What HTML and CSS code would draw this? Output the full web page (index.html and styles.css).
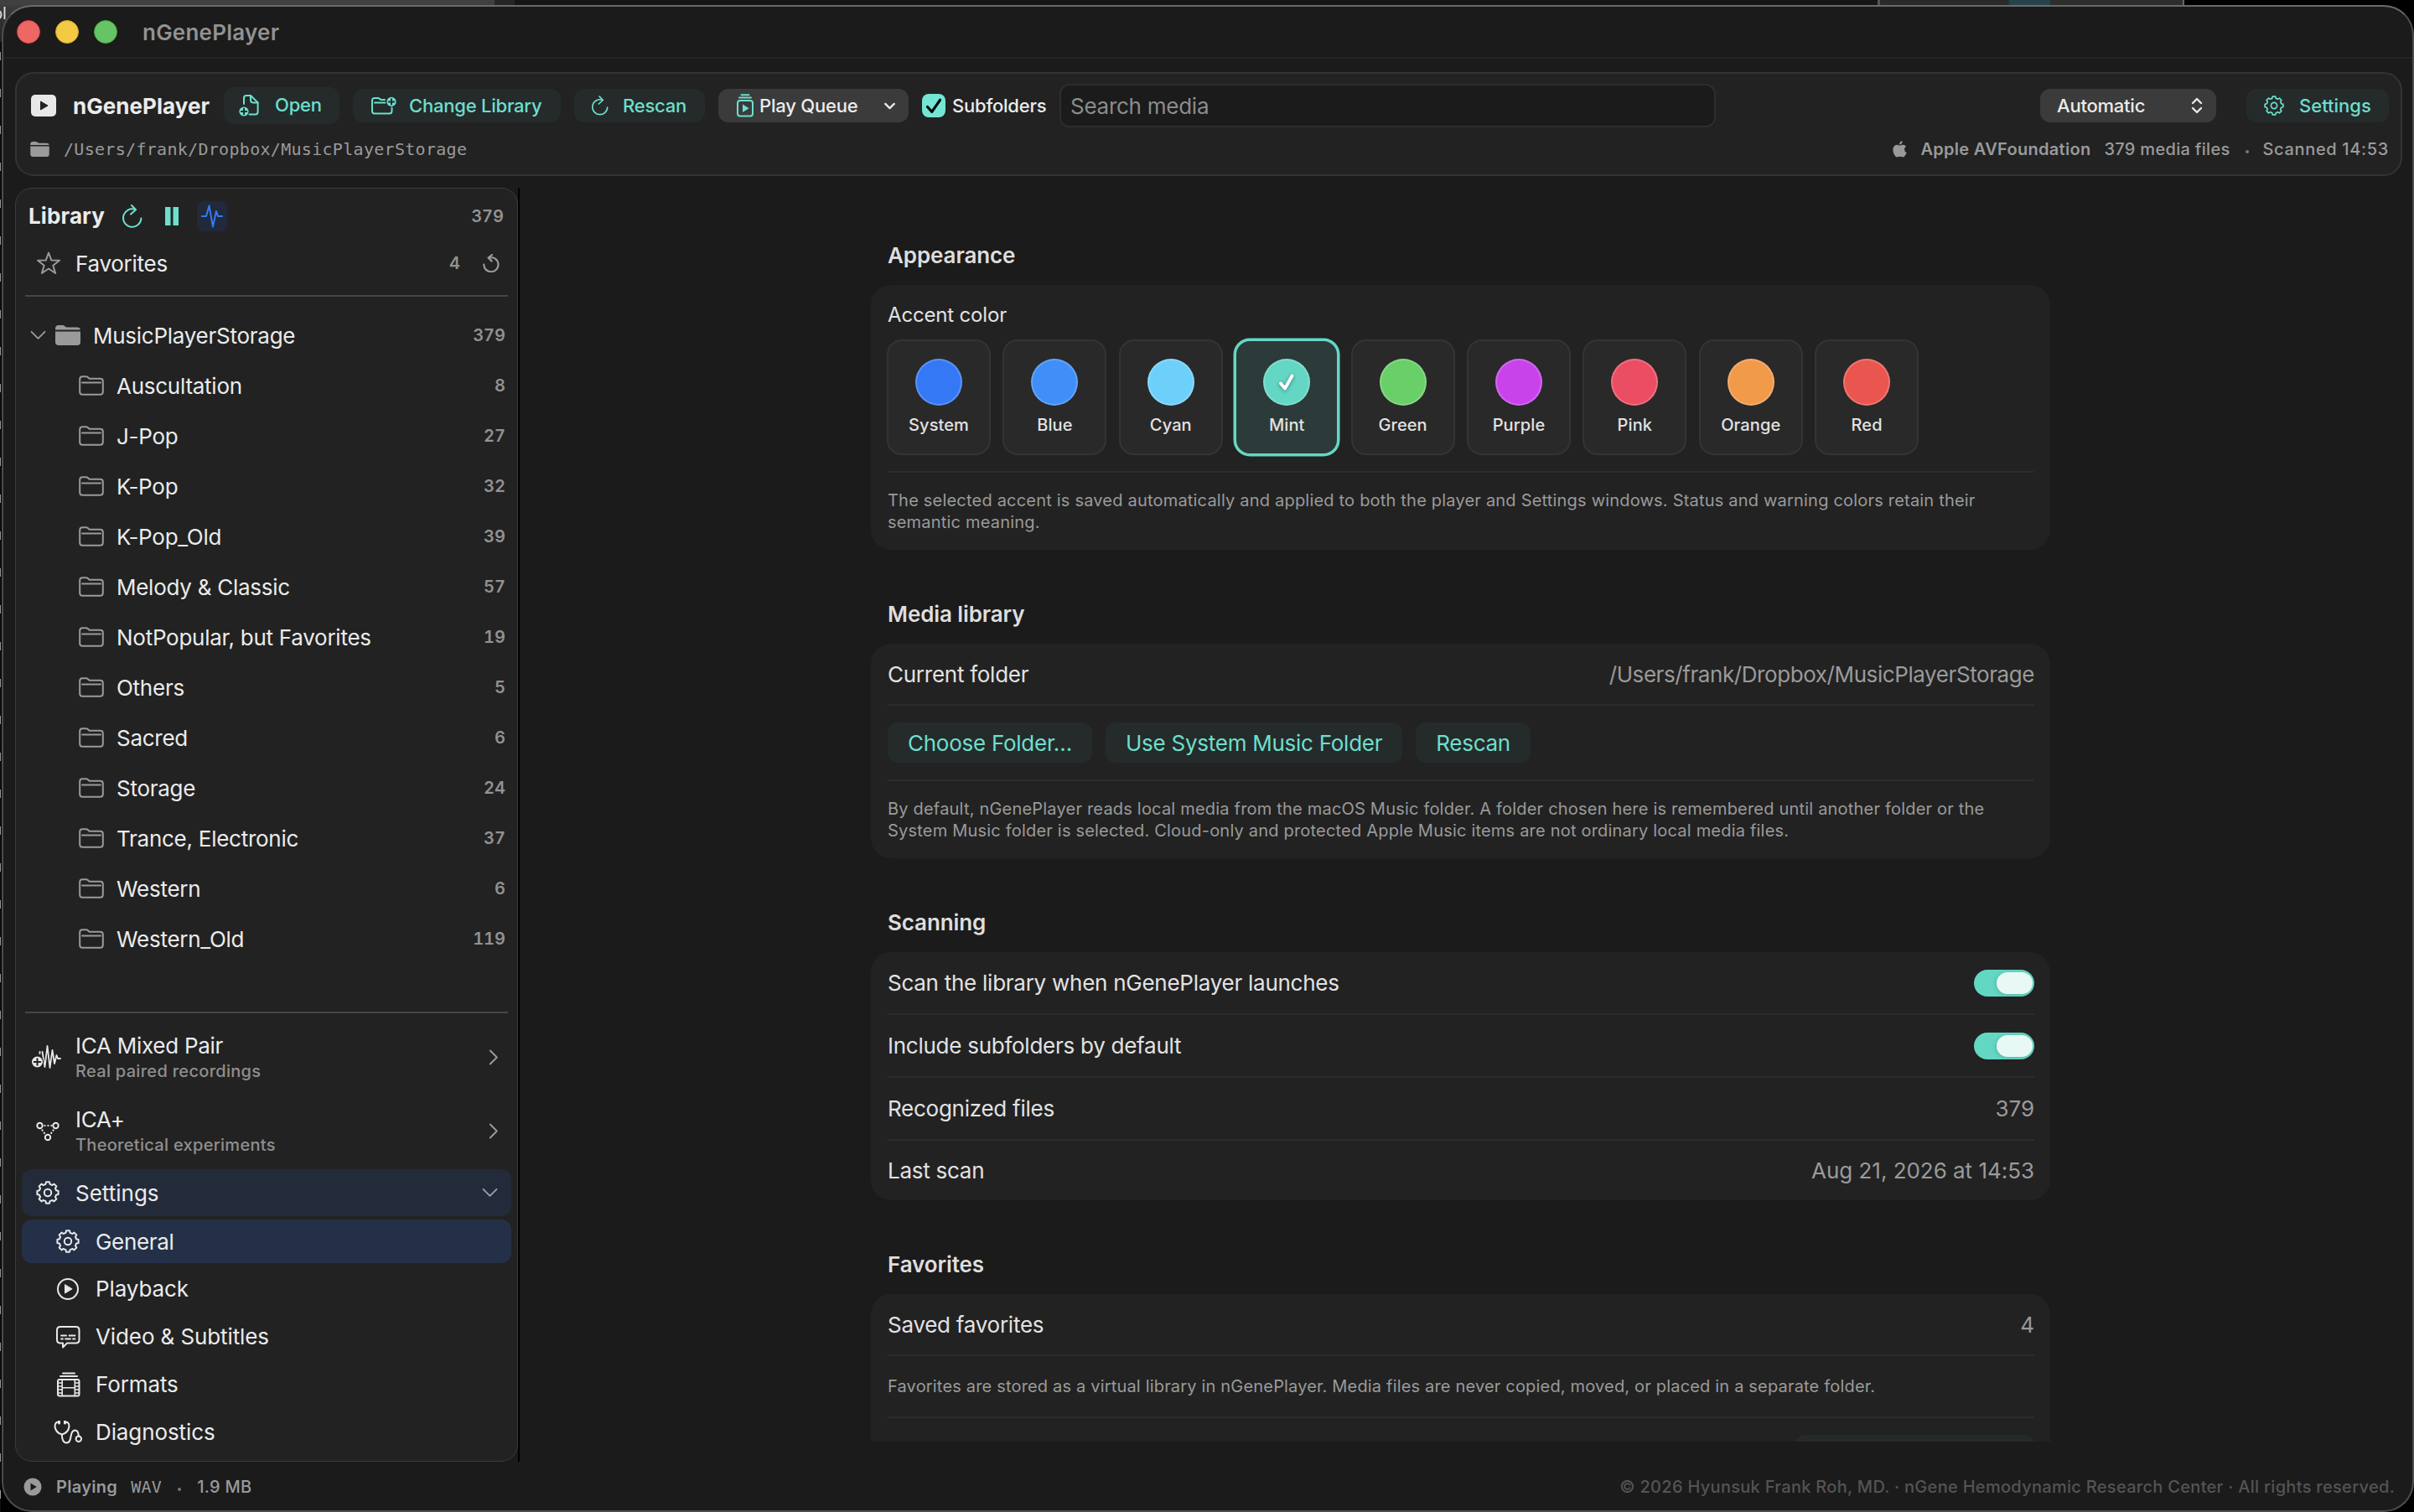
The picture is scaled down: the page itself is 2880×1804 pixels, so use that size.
FILE: index.html
```html
<!DOCTYPE html>
<html lang="en">
<head>
    <meta charset="UTF-8">
    <meta name="viewport" content="width=device-width, initial-scale=1.0">
    <title>nGenePlayer</title>
    <link rel="stylesheet" href="styles.css">
</head>
<body>
    <svg class="symbols" xmlns="http://www.w3.org/2000/svg">
        <symbol id="gear" viewBox="0 0 28 28">
            <path d="M11.33 4.05L12 1.36H16L16.67 4.05Q18 4.2 19.15 5.08L21.52 3.64L24.36 6.48L22.92 8.85Q23.8 10 23.95 11.33L26.64 12V16L23.95 16.67Q23.8 18 22.92 19.15L24.36 21.52L21.52 24.36L19.15 22.92Q18 23.8 16.67 23.95L16 26.64H12L11.33 23.95Q10 23.8 8.85 22.92L6.48 24.36L3.64 21.52L5.08 19.15Q4.2 18 4.05 16.67L1.36 16V12L4.05 11.33Q4.2 10 5.08 8.85L3.64 6.48L6.48 3.64L8.85 5.08Q10 4.2 11.33 4.05Z"/>
            <circle cx="14" cy="14" r="4.2"/>
        </symbol>
        <symbol id="rescan" viewBox="0 0 24 28">
            <path d="M22.4 16.4A10.7 10.7 0 1 1 15.4 6"/>
            <path d="M11 1L16 6.2L10 11.6"/>
        </symbol>
        <symbol id="folder" viewBox="0 0 30 24">
            <path d="M1.2 4.6Q1.2 1.2 4.4 1.2H8.6Q10 1.2 11 2.2L12 3.2Q12.6 3.8 13.8 3.8H25.6Q28.8 3.8 28.8 7V19.6Q28.8 22.8 25.6 22.8H4.4Q1.2 22.8 1.2 19.6Z"/>
            <path d="M4 8.4H26"/>
        </symbol>
        <symbol id="folder-fill" viewBox="0 0 30 24">
            <path d="M0 5.4V4Q0 0 4 0H8.4Q10.2 0 11.6 1.4Q12.6 2.4 14.4 2.4H26Q29.6 2.4 29.8 5.4Z"/>
            <path d="M0 7.4H30V20Q30 24 26 24H4Q0 24 0 20Z"/>
        </symbol>
        <symbol id="chevron-right" viewBox="0 0 12 20">
            <path d="M1.6 1.6L10 10L1.6 18.4"/>
        </symbol>
        <symbol id="chevron-down" viewBox="0 0 20 12">
            <path d="M1.6 1.6L10 10L18.4 1.6"/>
        </symbol>
    </svg>

    <div class="desktop-text">pl</div>

    <div class="window">
        <div class="titlebar">
            <span class="light red"></span>
            <span class="light yellow"></span>
            <span class="light green"></span>
            <span class="window-title">nGenePlayer</span>
        </div>

        <header class="toolbar">
            <div class="toolbar-row">
                <svg class="app-icon" width="30" height="26" viewBox="0 0 30 26"><rect width="30" height="26" rx="5" fill="#e8e8e8"/><path d="M11.5 8V18L20 13Z" fill="#222" stroke="#222" stroke-linejoin="round"/></svg>
                <h1>nGenePlayer</h1>
                <button class="btn open-btn">
                    <svg class="icon" width="24" height="26" viewBox="0 0 24 26">
                        <path d="M6 11V4Q6 1 9 1H14L22.6 9.4V20.6Q22.6 23.6 19.6 23.6H12.5"/>
                        <path d="M14 1V6.6Q14 9.4 16.8 9.4H22.6"/>
                        <circle cx="6" cy="20" r="5.6" fill="#6ddfcc" stroke="none"/>
                        <path d="M6 16.8V23.2M2.8 20H9.2" stroke="#252b2b"/>
                    </svg>
                    <span>Open</span>
                </button>
                <button class="btn change-btn">
                    <svg class="icon" width="30" height="22" viewBox="0 0 30 22">
                        <path d="M16 4H12Q11 4 10 3Q9 2 8 2H4Q1 2 1 5V17.4Q1 20.4 4 20.4H21.5Q24.5 20.4 24.5 17.4V13.5"/>
                        <path d="M4 7.6H16.5"/>
                        <circle cx="24" cy="6.4" r="5.6" fill="#6ddfcc" stroke="none"/>
                        <path d="M24 3.2V9.6M20.8 6.4H27.2" stroke="#252b2b"/>
                    </svg>
                    <span>Change Library</span>
                </button>
                <button class="btn rescan-btn">
                    <svg class="icon" width="20" height="24"><use href="#rescan"/></svg>
                    <span>Rescan</span>
                </button>
                <button class="btn queue-btn">
                    <svg class="icon" width="20" height="28" viewBox="0 0 20 28">
                        <path d="M5.5 1.2H14.5M3 4.6H17"/>
                        <rect x="1" y="8" width="18" height="18.6" rx="3"/>
                        <path d="M7 12.6V22L14.6 17.3Z" fill="#6ddfcc" stroke="none"/>
                    </svg>
                    <span>Play Queue</span>
                    <svg class="icon light-icon queue-arrow" width="13" height="9" viewBox="0 0 20 12"><path d="M2 2L10 10L18 2" stroke-width="3.6"/></svg>
                </button>
                <label class="subfolders">
                    <svg width="28" height="28" viewBox="0 0 28 28"><rect width="28" height="28" rx="8" fill="#74e6d6"/><path d="M6.5 15.5L11.8 21.3L21.5 7.3" fill="none" stroke="#000" stroke-width="3.2" stroke-linecap="round" stroke-linejoin="round"/></svg>
                    <span>Subfolders</span>
                </label>
                <div class="search">Search media</div>
                <div class="select">
                    <span>Automatic</span>
                    <svg class="icon light-icon" width="14" height="20" viewBox="0 0 14 20"><path d="M2 7L7 2L12 7M2 13L7 18L12 13" stroke-width="2.4"/></svg>
                </div>
                <button class="btn settings-btn">
                    <svg class="icon" width="24" height="24"><use href="#gear"/></svg>
                    <span>Settings</span>
                </button>
            </div>
            <div class="toolbar-row info-row">
                <svg class="solid" width="23" height="18"><use href="#folder-fill"/></svg>
                <span class="path">/Users/frank/Dropbox/MusicPlayerStorage</span>
                <svg class="solid apple" width="17" height="20" viewBox="0 0 17 20"><path d="M11.6 0Q11.8 1.8 10.7 3.2Q9.6 4.6 8.1 4.6Q7.9 2.9 9 1.6Q10.1 .3 11.6 0Z"/><path d="M8.6 5.6Q9.6 5.6 10.6 5.1Q11.6 4.7 12.5 4.8Q14.8 5 16 6.8Q14 8.1 14 10.3Q14.1 13 16.7 14.1Q16 16 14.9 17.6Q13.7 19.4 12.4 19.5Q11.5 19.5 10.6 19.1Q9.7 18.7 8.7 18.7Q7.8 18.7 6.8 19.1Q5.9 19.5 5.2 19.5Q3.9 19.5 2.5 17.5Q.3 14.3 .3 10.8Q.3 8 1.7 6.4Q3.1 4.8 5 4.8Q6 4.8 7 5.2Q8 5.6 8.6 5.6Z"/></svg>
                <span class="engine">Apple AVFoundation</span>
                <span class="count">379 media files</span>
                <span class="dot"></span>
                <span class="scanned">Scanned 14:53</span>
            </div>
        </header>

        <div class="content">
            <aside class="sidebar">
                <div class="panel">
                    <div class="library-head">
                        <h2>Library</h2>
                        <svg class="icon" width="24" height="28"><use href="#rescan"/></svg>
                        <svg class="pause" width="16" height="22"><path d="M0 0H6.5V22H0ZM9.5 0H16V22H9.5Z" fill="#6ddfcc"/></svg>
                        <span class="pulse"><svg width="26" height="28" viewBox="0 0 26 28"><path d="M1 14H6L9.5 1.5L14 26.5L18 8L20 14H25" fill="none" stroke="#3478f6" stroke-width="2" stroke-linejoin="round" stroke-linecap="round"/></svg></span>
                        <span class="num">379</span>
                    </div>
                    <div class="favorites">
                        <svg class="icon gray-icon" width="30" height="28" viewBox="0 0 30 28"><path d="M15 1.5L18.3 10.6L28 10.8L20.3 16.7L23.1 26L15 20.5L6.9 26L9.7 16.7L2 10.8L11.7 10.6Z"/></svg>
                        <span>Favorites</span>
                        <span class="num">4</span>
                        <svg class="icon gray-icon" width="20" height="22" viewBox="0 0 20 22"><path d="M1.3 12.5A8.6 8.6 0 1 0 8 4.3M11 1L6.5 4.5L10.7 8.6" stroke-width="2.2"/></svg>
                    </div>
                    <hr>
                    <ul class="tree">
                        <li class="root">
                            <svg class="icon gray-icon" width="19" height="12"><use href="#chevron-down"/></svg>
                            <svg class="solid" width="30" height="24"><use href="#folder-fill"/></svg>
                            <span>MusicPlayerStorage</span><span class="num">379</span>
                        </li>
                        <li><svg class="icon gray-icon" width="30" height="24"><use href="#folder"/></svg><span>Auscultation</span><span class="num">8</span></li>
                        <li><svg class="icon gray-icon" width="30" height="24"><use href="#folder"/></svg><span>J-Pop</span><span class="num">27</span></li>
                        <li><svg class="icon gray-icon" width="30" height="24"><use href="#folder"/></svg><span>K-Pop</span><span class="num">32</span></li>
                        <li><svg class="icon gray-icon" width="30" height="24"><use href="#folder"/></svg><span>K-Pop_Old</span><span class="num">39</span></li>
                        <li><svg class="icon gray-icon" width="30" height="24"><use href="#folder"/></svg><span>Melody &amp; Classic</span><span class="num">57</span></li>
                        <li><svg class="icon gray-icon" width="30" height="24"><use href="#folder"/></svg><span>NotPopular, but Favorites</span><span class="num">19</span></li>
                        <li><svg class="icon gray-icon" width="30" height="24"><use href="#folder"/></svg><span>Others</span><span class="num">5</span></li>
                        <li><svg class="icon gray-icon" width="30" height="24"><use href="#folder"/></svg><span>Sacred</span><span class="num">6</span></li>
                        <li><svg class="icon gray-icon" width="30" height="24"><use href="#folder"/></svg><span>Storage</span><span class="num">24</span></li>
                        <li><svg class="icon gray-icon" width="30" height="24"><use href="#folder"/></svg><span>Trance, Electronic</span><span class="num">37</span></li>
                        <li><svg class="icon gray-icon" width="30" height="24"><use href="#folder"/></svg><span>Western</span><span class="num">6</span></li>
                        <li><svg class="icon gray-icon" width="30" height="24"><use href="#folder"/></svg><span>Western_Old</span><span class="num">119</span></li>
                    </ul>
                    <hr>
                    <div class="tool">
                        <svg class="icon light-icon" width="36" height="32" viewBox="0 0 36 32">
                            <path d="M10.5 9V11M13.5 9L16.5 27L19.5 2L22.5 28L25.5 7L28 23L30.5 13L32 17H35" stroke-width="1.8"/>
                            <circle cx="7.5" cy="21" r="7.8" fill="#222" stroke="none"/>
                            <circle cx="7.5" cy="21" r="6.5" fill="#e8e8e8" stroke="none"/>
                            <path d="M7.5 17.2V24.8M3.7 21H11.3" stroke="#222"/>
                        </svg>
                        <div class="tool-text"><span>ICA Mixed Pair</span><small>Real paired recordings</small></div>
                        <svg class="icon gray-icon" width="12" height="19"><use href="#chevron-right"/></svg>
                    </div>
                    <div class="tool">
                        <svg class="icon light-icon" width="36" height="24" viewBox="0 0 36 24">
                            <circle cx="10.5" cy="5" r="3.2"/><circle cx="29.5" cy="5" r="3.2"/><circle cx="20" cy="19" r="3.2"/>
                            <path d="M16.5 5H24.5M13.5 10.5L17 15.5M26.5 10.5L23 15.5" stroke-dasharray="0.1 3.8" stroke-width="2.2"/>
                        </svg>
                        <div class="tool-text"><span>ICA+</span><small>Theoretical experiments</small></div>
                        <svg class="icon gray-icon" width="12" height="19"><use href="#chevron-right"/></svg>
                    </div>
                    <div class="settings-head">
                        <svg class="icon light-icon" width="28" height="28"><use href="#gear"/></svg>
                        <span>Settings</span>
                        <svg class="icon" width="19" height="12"><use href="#chevron-down"/></svg>
                    </div>
                    <nav class="settings-nav">
                        <a class="active"><svg class="icon light-icon" width="34" height="28"><use href="#gear"/></svg>General</a>
                        <a><svg class="icon light-icon" width="34" height="28" viewBox="0 0 34 28"><circle cx="17" cy="14" r="12"/><path d="M13.5 9V19L21.8 14Z" fill="#e8e8e8" stroke-width="1"/></svg>Playback</a>
                        <a><svg class="icon light-icon" width="34" height="28" viewBox="0 0 34 28"><path d="M8 2H26.5Q30.5 2 30.5 6V17.5Q30.5 21.5 26.5 21.5H16L11 26.5V21.5H8Q4 21.5 4 17.5V6Q4 2 8 2Z"/><path d="M9 12.5H15M18.5 12.5H25.5M9 16.5H11M14 16.5H20M23 16.5H25.5" stroke-width="1.8"/></svg>Video &amp; Subtitles</a>
                        <a><svg class="icon light-icon" width="34" height="30" viewBox="0 0 34 30"><path d="M11 1.5H25M8 5H28"/><rect x="5" y="9" width="25.5" height="19.5" rx="2"/><path d="M10.2 9V28.5M25.3 9V28.5M10 18.7H25.5M5 13H10M5 17H10M5 21H10M5 25H10M25.5 13H30M25.5 17H30M25.5 21H30M25.5 25H30" stroke-width="1.6"/></svg>Formats</a>
                        <a><svg class="icon light-icon" width="34" height="28" viewBox="0 0 34 28"><path d="M6.5 2Q1.5 1 1.5 7Q2.5 14.5 9.8 16.5Q17.5 14.5 18.5 7Q18.5 1 13.5 2"/><path d="M9.8 16.5Q10 26.5 15.5 26.5Q19.5 26.5 20.5 19Q21.5 11.5 25.5 11.5Q29.5 11.5 29.8 18.5"/><circle cx="29.8" cy="21.8" r="3.2"/><path d="M6.5 1V3M13.5 1V3" stroke-width="3"/></svg>Diagnostics</a>
                    </nav>
                </div>
            </aside>

            <main class="settings">
                <h3>Appearance</h3>
                <section class="card">
                    <div class="accent-label">Accent color</div>
                    <div class="swatches">
                        <div class="swatch"><i class="system"></i>System</div>
                        <div class="swatch"><i class="blue"></i>Blue</div>
                        <div class="swatch"><i class="cyan"></i>Cyan</div>
                        <div class="swatch selected"><i class="mint"><svg width="22" height="26" viewBox="0 0 22 26"><path d="M4 14.5L9 20.5L17.5 5.5" fill="none" stroke="#fff" stroke-width="3.8" stroke-linecap="round" stroke-linejoin="round"/></svg></i>Mint</div>
                        <div class="swatch"><i class="green-accent"></i>Green</div>
                        <div class="swatch"><i class="purple"></i>Purple</div>
                        <div class="swatch"><i class="pink"></i>Pink</div>
                        <div class="swatch"><i class="orange"></i>Orange</div>
                        <div class="swatch"><i class="red-accent"></i>Red</div>
                    </div>
                    <p class="note">The selected accent is saved automatically and applied to both the player and Settings windows. Status and warning colors retain their<br>semantic meaning.</p>
                </section>

                <h3>Media library</h3>
                <section class="card">
                    <div class="row"><span>Current folder</span><span class="value long">/Users/frank/Dropbox/MusicPlayerStorage</span></div>
                    <div class="row buttons">
                        <button>Choose Folder…</button>
                        <button>Use System Music Folder</button>
                        <button>Rescan</button>
                    </div>
                    <p class="note">By default, nGenePlayer reads local media from the macOS Music folder. A folder chosen here is remembered until another folder or the<br>System Music folder is selected. Cloud-only and protected Apple Music items are not ordinary local media files.</p>
                </section>

                <h3>Scanning</h3>
                <section class="card scanning">
                    <div class="row"><span>Scan the library when nGenePlayer launches</span><span class="toggle"></span></div>
                    <div class="row"><span>Include subfolders by default</span><span class="toggle"></span></div>
                    <div class="row"><span>Recognized files</span><span class="value">379</span></div>
                    <div class="row"><span>Last scan</span><span class="value">Aug 21, 2026 at 14:53</span></div>
                </section>

                <h3>Favorites</h3>
                <section class="card">
                    <div class="row"><span>Saved favorites</span><span class="value">4</span></div>
                    <div class="row"><span class="note-text">Favorites are stored as a virtual library in nGenePlayer. Media files are never copied, moved, or placed in a separate folder.</span></div>
                    <div class="row clear-row"><button class="clear-btn"></button></div>
                </section>
            </main>
        </div>

        <footer class="statusbar">
            <svg width="22" height="22" viewBox="0 0 22 22"><circle cx="11" cy="11" r="10.5" fill="#9a9a9a"/><path d="M8.5 6.5V15.5L15.8 11Z" fill="#1b1b1b"/></svg>
            <b>Playing</b>
            <span class="format">WAV</span>
            <span class="dot"></span>
            <span class="size">1.9 MB</span>
            <span class="copyright">© 2026 Hyunsuk Frank Roh, MD. · nGene Hemodynamic Research Center · All rights reserved.</span>
        </footer>
    </div>
</body>
</html>
```
FILE: styles.css
```css
* {
    box-sizing: border-box;
}
body {
    margin: 0;
    width: 2880px;
    height: 1804px;
    padding: 6px 0 0 2px;
    overflow: hidden;
    position: relative;
    font-family: Inter, "Liberation Sans", sans-serif;
    font-size: 26px;
    letter-spacing: -0.01em;
    color: #ebebeb;
    background:
        linear-gradient(90deg, #404040 590px, #262626 590px, #262626 614px, #161616 614px, #161616 2240px, #555 2240px, #555 2243px, #2a2a2a 2243px, #2a2a2a 2396px, #28424b 2398px, #28424b 2446px, #2d2d2d 2446px, #2d2d2d 2604px, #666 2604px, #666 2606px, #000 2606px) 0 0 / 100% 6px no-repeat,
        linear-gradient(#404040, #222) 0 0 / 40px 50px no-repeat,
        repeating-linear-gradient(#111 0, #111 18px, #999 18px, #999 28px, #111 28px, #111 44px) 0 0 / 1px 100% no-repeat,
        #000;
}
h1, h2, h3, p, ul {
    margin: 0;
    padding: 0;
}
ul {
    list-style: none;
}
button {
    font: inherit;
    letter-spacing: inherit;
    border: none;
    padding: 0;
    color: #6ddfcc;
    background: #252b2b;
    border-radius: 12px;
}
svg {
    display: block;
    flex: none;
}
.symbols {
    position: absolute;
    width: 0;
    height: 0;
}
.icon {
    fill: none;
    stroke: #6ddfcc;
    stroke-width: 2;
    stroke-linecap: round;
    stroke-linejoin: round;
}
.light-icon {
    stroke: #e8e8e8;
}
.gray-icon {
    stroke: #9a9a9a;
}
.solid {
    fill: #9a9a9a;
}
.desktop-text {
    position: absolute;
    left: -9px;
    top: 4px;
    font-size: 20px;
    color: #ddd;
}

.window {
    position: relative;
    display: flex;
    flex-direction: column;
    height: 1798px;
    background: #1b1b1b;
    border: 2px solid #4d4d4d;
    border-top-color: #6a6a6a;
    border-radius: 36px;
    overflow: hidden;
}
.titlebar {
    display: flex;
    align-items: center;
    height: 62px;
    padding-left: 16px;
    border-bottom: 2px solid #242424;
}
.light {
    width: 28px;
    height: 28px;
    margin-right: 18px;
    border-radius: 50%;
}
.red { background: #ed6765; border: 1px solid #d8453f; }
.yellow { background: #f4c944; border: 1px solid #d9a520; }
.green { background: #66c466; border: 1px solid #46a843; }
.window-title {
    margin-left: 12px;
    font-weight: 600;
    letter-spacing: 0.009em;
    color: #929292;
}

/* toolbar */
.toolbar {
    height: 124px;
    margin: 16px 12px 0 14px;
    padding: 10px 14px 0 17px;
    background: #222;
    border: 2px solid #333;
    border-radius: 22px;
}
.toolbar-row {
    display: flex;
    align-items: center;
    height: 56px;
    font-size: 22px;
    font-weight: 500;
    letter-spacing: -0.01em;
}
.toolbar h1 {
    width: 162px;
    margin: 0 18px 0 20px;
    font-size: 26px;
    font-weight: 700;
    letter-spacing: 0.002em;
}
.btn {
    display: flex;
    align-items: center;
    height: 40px;
    margin-right: 16px;
    white-space: nowrap;
}
.open-btn {
    width: 138px;
    height: 44px;
    padding-left: 18px;
    gap: 19px;
}
.open-btn span {
    margin-top: -2px;
}
.change-btn {
    width: 248px;
    padding-left: 22px;
    gap: 15px;
}
.rescan-btn {
    width: 156px;
    padding-left: 21px;
    gap: 17px;
}
.queue-btn {
    width: 227px;
    padding-left: 22px;
    gap: 7px;
    color: #ececec;
    background: #3b3b3b;
}
.queue-arrow {
    margin-left: 25px;
}
.subfolders {
    display: flex;
    align-items: center;
    gap: 8px;
    width: 164px;
    white-space: nowrap;
}
.search {
    width: 783px;
    height: 52px;
    padding-left: 11px;
    line-height: 49px;
    font-size: 26px;
    font-weight: 400;
    letter-spacing: -0.01em;
    color: #8c8c8c;
    background: #1b1b1b;
    border: 2px solid #2d2d2d;
    border-radius: 12px;
}
.select {
    display: flex;
    align-items: center;
    justify-content: space-between;
    width: 210px;
    height: 40px;
    margin: 0 36px 0 auto;
    padding: 0 16px 0 20px;
    background: #3b3b3b;
    border-radius: 12px;
}
.settings-btn {
    width: 170px;
    margin-right: 0;
    padding-left: 21px;
    gap: 18px;
    letter-spacing: 0;
}
.info-row {
    height: 24px;
    margin-top: 12px;
    margin-left: -1px;
    font-size: 20px;
    letter-spacing: 0.015em;
    color: #9a9a9a;
}
.path {
    margin-left: 17px;
    font-family: "DejaVu Sans Mono", monospace;
    font-size: 20px;
    font-weight: 400;
    letter-spacing: 0.3px;
}
.apple {
    margin-left: auto;
}
.engine {
    margin: 0 16px;
    font-weight: 600;
}
.dot {
    width: 4px;
    height: 4px;
    margin: 6px 17px 0 18px;
    border-radius: 50%;
    background: #777;
}
.scanned {
    letter-spacing: 0.033em;
}

.content {
    display: flex;
    height: 1534px;
    padding: 14px 0 0 14px;
}

/* sidebar */
.sidebar {
    width: 602px;
    border-right: 2px solid #000;
}
.panel {
    height: 1520px;
    background: #222;
    border: 1px solid #3c3c3c;
    border-radius: 20px;
}
.num {
    margin-left: auto;
    font-size: 20px;
    font-weight: 600;
    font-variant-numeric: tabular-nums;
    letter-spacing: 0;
    color: #929292;
}
.library-head {
    display: flex;
    align-items: center;
    height: 65px;
    padding: 0 16px 0 15px;
}
.library-head h2 {
    width: 112px;
    font-size: 26px;
    font-weight: 700;
    letter-spacing: 0.005em;
}
.pause {
    margin: 0 22px 0 27px;
}
.pulse {
    display: flex;
    align-items: center;
    justify-content: center;
    width: 36px;
    height: 36px;
    background: #202a3a;
    border-radius: 8px;
}
.favorites {
    display: flex;
    align-items: center;
    height: 48px;
    padding: 0 21px 0 24px;
}
.favorites .num {
    margin-right: 27px;
}
.favorites span:nth-child(2) {
    margin-left: 17px;
}
hr {
    height: 2px;
    margin: 14px 11px 16px;
    border: none;
    background: #464646;
}
.tree li {
    display: flex;
    align-items: center;
    height: 60px;
    padding: 0 14px 0 75px;
}
.tree li span:not(.num) {
    margin-left: 15px;
}
.tree li.root {
    padding-left: 17px;
}
.tree .root .solid {
    margin-left: 11px;
}
.tree + hr {
    margin: 57px 11px 9px;
}
.tool {
    display: flex;
    align-items: center;
    height: 88px;
    padding: 0 22px 0 18px;
}
.tool > svg {
    margin-top: -1px;
}
.tool-text {
    display: flex;
    flex-direction: column;
    flex: 1;
    padding-left: 17px;
}
.tool-text span {
    line-height: 32px;
}
.tool-text small {
    line-height: 28px;
    font-size: 20px;
    font-weight: 500;
    letter-spacing: 0.015em;
    color: #8f8f8f;
}
.settings-head {
    display: flex;
    align-items: center;
    justify-content: space-between;
    height: 56px;
    margin: 1px 7px 4px;
    padding: 0 16px 0 17px;
    letter-spacing: 0;
    background: #232b3a;
    border-radius: 12px;
}
.settings-head span {
    flex: 1;
    padding-left: 19px;
}
.settings-head svg:last-child {
    stroke: #97a0b0;
}
.settings-nav a {
    display: flex;
    align-items: center;
    height: 57px;
    margin: 0 7px;
    padding-left: 38px;
    gap: 16px;
    letter-spacing: -0.004em;
}
.settings-nav .active {
    height: 52px;
    margin-bottom: 2px;
    background: #243047;
    border-radius: 12px;
    letter-spacing: -0.012em;
}

/* settings form */
.settings {
    width: 1407px;
    height: 1496px;
    margin-left: 419px;
    overflow: hidden;
}
.settings h3 {
    margin: 61px 0 19px 20px;
    line-height: 32px;
    font-size: 26px;
    font-weight: 600;
    letter-spacing: -0.004em;
    color: #dedede;
}
.settings h3:first-child {
    margin-top: 65px;
}
.card {
    padding: 0 19px 0 20px;
    background: #222;
    border-radius: 24px;
    color: #e2e2e2;
}
.accent-label {
    padding-top: 21px;
    line-height: 30px;
    font-size: 24px;
    letter-spacing: -0.007em;
}
.swatches {
    display: flex;
    gap: 14.4px;
    margin: 14px 0 19px -1px;
}
.swatch {
    display: flex;
    flex-direction: column;
    align-items: center;
    width: 124px;
    height: 138px;
    padding-top: 21px;
    font-size: 20px;
    font-weight: 500;
    letter-spacing: 0.005em;
    background: #292929;
    border: 2px solid #343434;
    border-radius: 18px;
}
.swatch i {
    display: flex;
    align-items: center;
    justify-content: center;
    width: 56px;
    height: 56px;
    margin-bottom: 11px;
    border: 2px solid rgba(255, 255, 255, 0.2);
    border-radius: 50%;
}
.swatch.selected {
    background: #2c3a39;
    border-color: #64d8c5;
    box-shadow: 0 0 0 1.5px #64d8c5;
}
.system { background-color: #3478f6; }
.blue { background-color: #408ef7; }
.cyan { background-color: #6dd0fa; }
.mint { background-color: #64d6c4; }
.green-accent { background-color: #69cf68; }
.purple { background-color: #c943eb; }
.pink { background-color: #eb4d63; }
.orange { background-color: #f19a4a; }
.red-accent { background-color: #eb554f; }
.mint svg {
    filter: drop-shadow(0 1px 2px rgba(0, 0, 0, 0.4));
}
.note {
    padding: 20px 0;
    line-height: 26px;
    font-size: 20px;
    letter-spacing: 0.01em;
    color: #9a9a9a;
    border-top: 2px solid #2c2c2c;
    white-space: nowrap;
}
.note-text {
    font-size: 20px;
    letter-spacing: 0.009em;
    color: #9a9a9a;
}
.row {
    display: flex;
    align-items: center;
    justify-content: space-between;
    height: 74px;
    border-top: 2px solid #2c2c2c;
}
.row:first-child {
    height: 72px;
    border-top: none;
}
.scanning .row {
    height: 75px;
}
.scanning .row:first-child,
.scanning .row:last-child {
    height: 73px;
}
.value {
    letter-spacing: -0.001em;
    color: #9a9a9a;
}
.value.long {
    letter-spacing: -0.016em;
}
.buttons.buttons {
    height: 90px;
    justify-content: flex-start;
    gap: 16px;
}
.buttons button {
    height: 48px;
    padding: 0 24px;
}
.toggle {
    display: flex;
    justify-content: flex-end;
    width: 72px;
    height: 32px;
    padding: 3px 2px;
    background: #64d6c4;
    border-radius: 16px;
}
.toggle::after {
    content: "";
    width: 43px;
    height: 26px;
    background: #e8f8f5;
    border-radius: 13px;
    box-shadow: -1px 1px 5px rgba(0, 0, 0, 0.15);
}
.clear-row.clear-row {
    height: 90px;
    justify-content: flex-end;
}
.clear-btn {
    width: 286px;
    height: 48px;
}

.statusbar {
    display: flex;
    align-items: center;
    height: 58px;
    padding: 1px 21px 0 24px;
    font-size: 20px;
    font-weight: 500;
    letter-spacing: 0.015em;
    color: #9a9a9a;
}
.statusbar b {
    margin: 0 16px 0 17px;
    font-weight: 600;
}
.format {
    font-family: "DejaVu Sans Mono", monospace;
    font-weight: 400;
}
.statusbar .dot {
    margin-left: 19px;
    margin-right: 19px;
}
.copyright {
    margin-left: auto;
    color: #545454;
}
```
